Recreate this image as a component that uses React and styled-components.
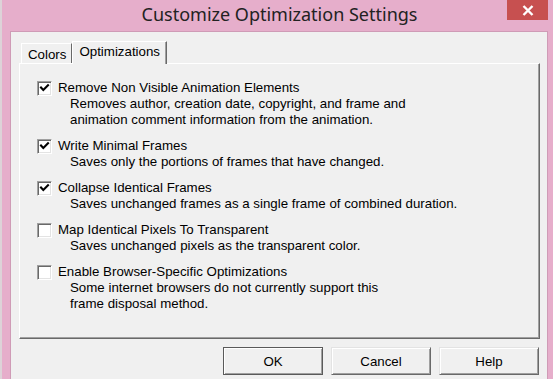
import React from 'react'
import styled, { createGlobalStyle } from 'styled-components'

const GlobalStyle = createGlobalStyle`
  html, body {
    margin: 0;
    padding: 0;
    background: #f0f0f0;
  }
  body {
    font-family: "Liberation Sans", Arial, sans-serif;
  }
`

const items = [
  {
    title: 'Remove Non Visible Animation Elements',
    lines: [
      'Removes author, creation date, copyright, and frame and',
      'animation comment information from the animation.',
    ],
    checked: true,
  },
  {
    title: 'Write Minimal Frames',
    lines: ['Saves only the portions of frames that have changed.'],
    checked: true,
  },
  {
    title: 'Collapse Identical Frames',
    lines: ['Saves unchanged frames as a single frame of combined duration.'],
    checked: true,
  },
  {
    title: 'Map Identical Pixels To Transparent',
    lines: ['Saves unchanged pixels as the transparent color.'],
    checked: false,
  },
  {
    title: 'Enable Browser-Specific Optimizations',
    lines: [
      'Some internet browsers do not currently support this',
      'frame disposal method.',
    ],
    checked: false,
  },
]

function CheckBox({ checked }) {
  return (
    <Box>
      {checked && (
        <svg width="11" height="11" viewBox="0 0 11 11">
          <path d="M2 4.5 L4.3 7 L9 2.3" fill="none" stroke="#000" strokeWidth="2.1" strokeLinecap="square" />
        </svg>
      )}
    </Box>
  )
}

export default function App() {
  return (
    <>
      <GlobalStyle />
      <Window>
        <TitleBar>
          <Title>Customize Optimization Settings</Title>
          <CloseButton>
            <svg width="12" height="11" viewBox="0 0 12 11">
              <path d="M1.5 1 L10.5 10 M10.5 1 L1.5 10" stroke="#fff" strokeWidth="2.4" />
            </svg>
          </CloseButton>
        </TitleBar>
        <Client>
          <TabRow>
            <Tab>Colors</Tab>
            <Tab $active>Optimizations</Tab>
          </TabRow>
          <Panel>
            {items.map((item) => (
              <Option key={item.title}>
                <OptionHead>
                  <CheckBox checked={item.checked} />
                  <OptionTitle>{item.title}</OptionTitle>
                </OptionHead>
                {item.lines.map((line) => (
                  <Desc key={line}>{line}</Desc>
                ))}
              </Option>
            ))}
          </Panel>
          <ButtonRow>
            <Button $default>OK</Button>
            <Button>Cancel</Button>
            <Button>Help</Button>
          </ButtonRow>
        </Client>
      </Window>
    </>
  )
}

const Window = styled.div`
  width: 553px;
  height: 379px;
  overflow: hidden;
  box-sizing: border-box;
  background: #e6aecb;
  border-left: 2px solid #ddd3d8;
  display: flex;
  flex-direction: column;
`

const TitleBar = styled.div`
  height: 31px;
  flex: none;
  display: flex;
  align-items: flex-start;
  padding-right: 5px;
`

const Title = styled.div`
  flex: 1;
  text-align: center;
  padding-left: 50px;
  padding-top: 2px;
  font-family: "Noto Sans", "Open Sans", sans-serif;
  font-size: 18px;
  line-height: 24px;
  color: #222;
`

const CloseButton = styled.div`
  width: 41px;
  height: 20px;
  background: #c75050;
  display: flex;
  align-items: center;
  justify-content: center;
`

const Client = styled.div`
  flex: 1;
  margin-left: 8px;
  margin-right: 5px;
  border: 1px solid #cf9bb6;
  border-bottom: none;
  background: #f0f0f0;
  padding: 9px 7px 0 8px;
  display: flex;
  flex-direction: column;
`

const TabRow = styled.div`
  display: flex;
  align-items: flex-end;
  height: 22px;
  padding-left: 2px;
  position: relative;
  z-index: 1;
`

const Tab = styled.div`
  box-sizing: border-box;
  height: ${(p) => (p.$active ? '23px' : '20px')};
  margin-bottom: ${(p) => (p.$active ? '-1px' : '0')};
  padding: ${(p) => (p.$active ? '2px 6px 0 6px' : '3px 5px 0 6px')};
  background: #f0f0f0;
  border-top: 1px solid #fff;
  border-left: 1px solid #fff;
  border-right: 1px solid #696969;
  box-shadow: ${(p) => (p.$active ? 'inset -1px 0 #a0a0a0' : 'none')};
  font-size: 13.3px;
  line-height: 16px;
  color: #000;
  white-space: nowrap;
`

const Panel = styled.div`
  box-sizing: border-box;
  height: 276px;
  border-top: 1px solid #fff;
  border-left: 1px solid #fff;
  border-right: 1px solid #696969;
  border-bottom: 1px solid #696969;
  box-shadow: inset -1px -1px #a0a0a0;
  padding: 16px 16px 0 17px;
  display: flex;
  flex-direction: column;
  gap: 10px;
`

const Option = styled.div`
  display: flex;
  flex-direction: column;
`

const OptionHead = styled.div`
  display: flex;
  align-items: center;
  gap: 6px;
`

const Box = styled.div`
  box-sizing: border-box;
  width: 15px;
  height: 15px;
  background: #fff;
  border-top: 1px solid #a0a0a0;
  border-left: 1px solid #a0a0a0;
  border-right: 1px solid #fff;
  border-bottom: 1px solid #fff;
  box-shadow: inset 1px 1px #696969, inset -1px -1px #e3e3e3;
  display: flex;
  align-items: center;
  justify-content: center;
`

const OptionTitle = styled.div`
  font-size: 13.3px;
  line-height: 16px;
  color: #000;
`

const Desc = styled.div`
  padding-left: 33px;
  font-size: 13.3px;
  line-height: 16px;
  color: #000;
`

const ButtonRow = styled.div`
  display: flex;
  justify-content: flex-end;
  gap: 8px;
  margin-top: 8px;
  padding-right: 1px;
`

const Button = styled.div`
  box-sizing: border-box;
  width: 100px;
  height: 28px;
  background: #f0f0f0;
  border-top: 1px solid #e3e3e3;
  border-left: 1px solid #e3e3e3;
  border-right: 1px solid #696969;
  border-bottom: 1px solid #696969;
  box-shadow: inset 1px 1px #fff, inset -1px -1px #a0a0a0;
  outline: ${(p) => (p.$default ? '1px solid #5a5a5a' : 'none')};
  outline-offset: -1px;
  display: flex;
  align-items: center;
  justify-content: center;
  font-size: 13.3px;
  color: #000;
`
